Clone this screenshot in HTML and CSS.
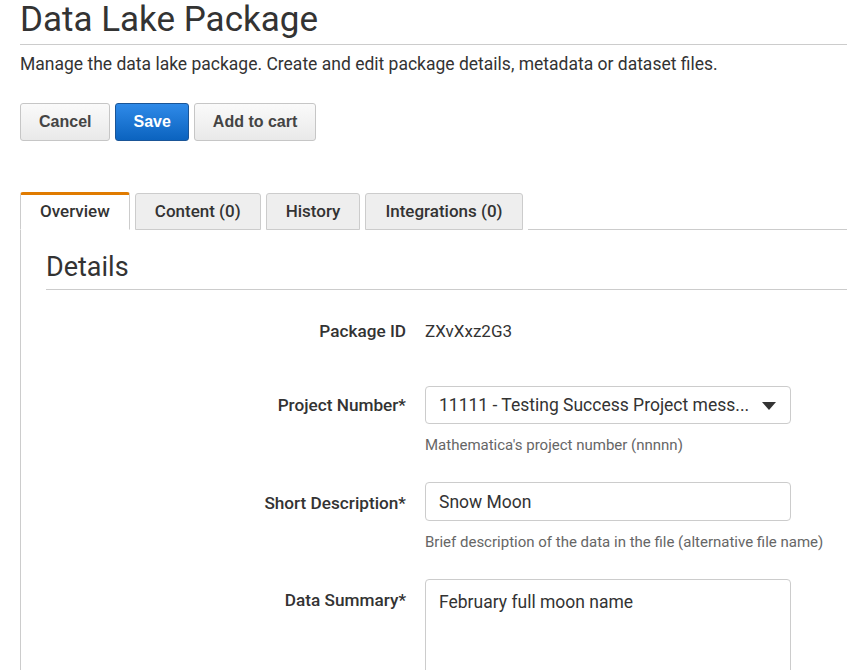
FILE: index.html
```html
<!DOCTYPE html>
<html>
<head>
<meta charset="utf-8">
<link rel="stylesheet" href="styles.css">
</head>
<body>
<div class="page">
  <h1 class="title">Data Lake Package</h1>
  <p class="desc">Manage the data lake package. Create and edit package details, metadata or dataset files.</p>
  <div class="actions">
    <button class="btn">Cancel</button>
    <button class="btn btn-primary">Save</button>
    <button class="btn">Add to cart</button>
  </div>
  <div class="tabs">
    <div class="tab active">Overview</div>
    <div class="tab">Content (0)</div>
    <div class="tab">History</div>
    <div class="tab">Integrations (0)</div>
    <div class="tab-fill"></div>
  </div>
  <div class="panel">
    <h2 class="section">Details</h2>
    <div class="form">
      <div class="label">Package ID</div>
      <div class="value static">ZXvXxz2G3</div>

      <div class="label field-label first-field">Project Number*</div>
      <div class="value first-field">
        <div class="select">
          <span class="select-text">11111 - Testing Success Project mess...</span>
          <svg class="caret" width="14" height="8" viewBox="0 0 14 8"><path d="M0 0 H14 L7 8 Z" fill="#333"/></svg>
        </div>
        <div class="help">Mathematica's project number (nnnnn)</div>
      </div>

      <div class="label field-label input-label">Short Description*</div>
      <div class="value">
        <div class="input">Snow Moon</div>
        <div class="help">Brief description of the data in the file (alternative file name)</div>
      </div>

      <div class="label field-label input-label">Data Summary*</div>
      <div class="value">
        <div class="input textarea">February full moon name</div>
      </div>
    </div>
  </div>
</div>
</body>
</html>
```

FILE: styles.css
```css
* { box-sizing: border-box; }
html, body { margin: 0; padding: 0; background: #fff; }
body {
  font-family: Roboto, "Liberation Sans", sans-serif;
  color: #333;
  overflow: hidden;
}
.page {
  padding-left: 20px;
}
.title {
  margin: 0;
  font-size: 35px;
  font-weight: 400;
  line-height: 40px;
  padding-bottom: 4px;
  border-bottom: 1px solid #ccc;
  color: #333;
}
.desc {
  margin: 0;
  padding-top: 8px;
  font-size: 17.5px;
  line-height: 22px;
  color: #333;
}
.actions {
  display: flex;
  gap: 5px;
  margin-top: 28px;
}
.btn {
  height: 38px;
  padding: 0 18px;
  font-family: "Liberation Sans", Arial, sans-serif;
  font-weight: 700;
  font-size: 16px;
  color: #444;
  background: linear-gradient(#fafafa, #e9e9e9);
  border: 1px solid #c6c6c6;
  border-radius: 3px;
}
.btn-primary {
  color: #fff;
  padding: 0 17px;
  background: linear-gradient(#2f8ae8, #0b63bf);
  border-color: #1a5597;
}
.tabs {
  display: flex;
  align-items: flex-end;
  margin-top: 51px;
  gap: 5px;
  height: 38px;
}
.tab {
  height: 37px;
  padding: 0 19px;
  font-size: 17px;
  font-weight: 500;
  line-height: 34px;
  background: #eee;
  border: 1px solid #ccc;
  border-radius: 3px 3px 0 0;
  color: #333;
  white-space: nowrap;
}
.tab.active {
  height: 38px;
  background: #fff;
  border-top: 3px solid #e07b00;
  border-bottom-color: #fff;
  line-height: 32px;
}
.tab-fill {
  flex: 1;
  border-bottom: 1px solid #ccc;
  height: 1px;
}
.panel {
  border-left: 1px solid #ccc;
  padding-left: 25px;
  height: 460px;
}
.section {
  margin: 0;
  padding-top: 19px;
  font-size: 27px;
  font-weight: 400;
  line-height: 36px;
  padding-bottom: 4px;
  border-bottom: 1px solid #ccc;
  color: #333;
}
.form {
  display: grid;
  grid-template-columns: 360px 366px;
  column-gap: 19px;
  row-gap: 28px;
  padding-top: 29px;
  align-items: start;
}
.label {
  text-align: right;
  font-size: 17.2px;
  font-weight: 500;
  line-height: 24px;
  color: #333;
}
.field-label {
  padding-top: 7px;
}
.field-label.input-label {
  padding-top: 9px;
}
.value.static {
  font-size: 17px;
  line-height: 24px;
  color: #333;
}
.first-field { margin-top: 15px; }
.select, .input {
  height: 38px;
  border: 1px solid #ccc;
  border-radius: 4px;
  padding: 0 13px;
  font-size: 17.5px;
  line-height: 36px;
  color: #333;
  background: #fff;
}
.input { height: 39px; line-height: 38px; }
.select {
  display: flex;
  align-items: center;
  justify-content: space-between;
}
.select-text { white-space: nowrap; }
.caret { margin-right: 1px; margin-top: 1px; }
.input.textarea {
  height: 120px;
  padding-top: 4px;
  line-height: 36px;
}
.help {
  margin-top: 12px;
  font-size: 15px;
  line-height: 18px;
  color: #666;
  white-space: nowrap;
}
```
